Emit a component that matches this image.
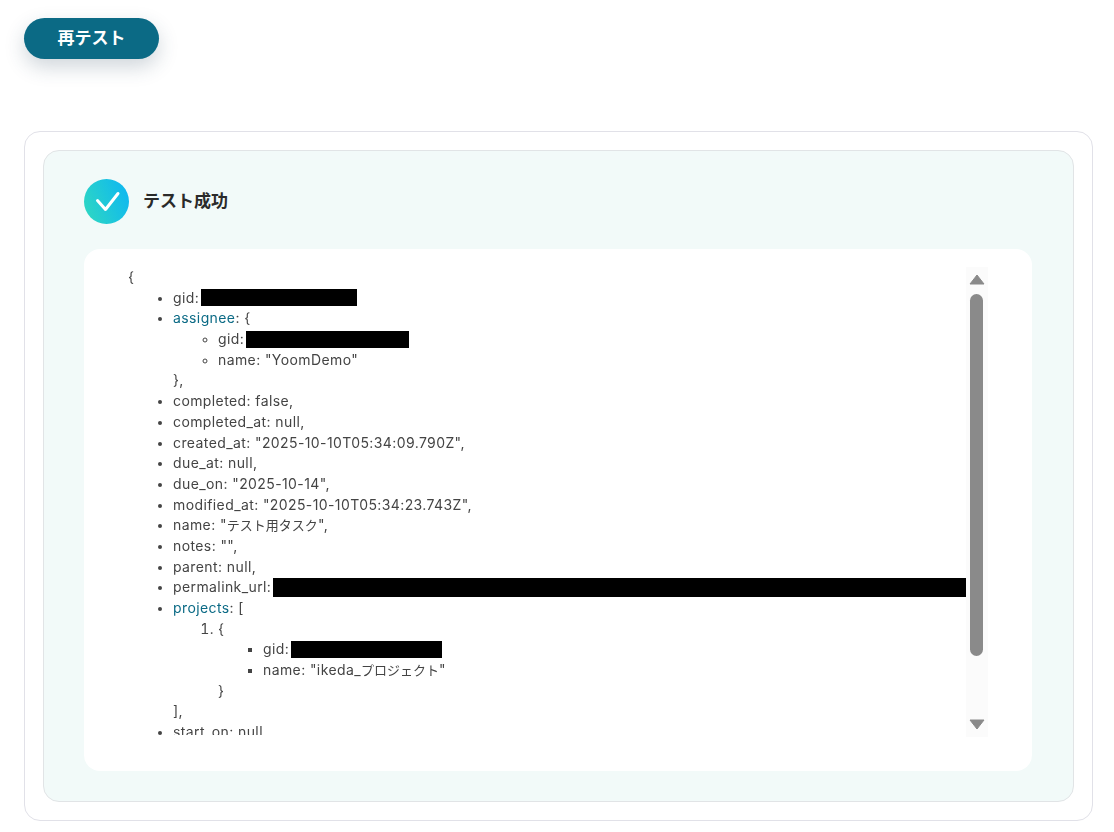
<script>
</script>

<div class="page">
  <button class="retest">再テスト</button>
  <section class="outer">
    <div class="inner">
      <header class="head">
        <svg class="check" width="45" height="45" viewBox="0 0 45 45">
          <defs>
            <linearGradient id="g" x1="0" y1="0.7" x2="1" y2="0.3">
              <stop offset="0" stop-color="#2dd6c4" />
              <stop offset="1" stop-color="#0fb8f0" />
            </linearGradient>
          </defs>
          <circle cx="22.5" cy="22.5" r="22.5" fill="url(#g)" />
          <path d="M13.5 21.5 L21.5 30.5 L34 14.5" fill="none" stroke="#fff" stroke-width="3" stroke-linecap="round" stroke-linejoin="round" />
        </svg>
        <h2>テスト成功</h2>
      </header>
      <div class="box">
        <div class="scroll">
          <div class="tree">
            <div>&#123;</div>
            <ul class="l1">
              <li>gid:<span class="red r1"></span></li>
              <li>
                <span class="key">assignee</span>: &#123;
                <ul class="l2">
                  <li>gid:<span class="red r2"></span></li>
                  <li>name: "YoomDemo"</li>
                </ul>
                &#125;,
              </li>
              <li>completed: false,</li>
              <li>completed_at: null,</li>
              <li>created_at: "2025-10-10T05:34:09.790Z",</li>
              <li>due_at: null,</li>
              <li>due_on: "2025-10-14",</li>
              <li>modified_at: "2025-10-10T05:34:23.743Z",</li>
              <li>name: "<span class="ja">テスト用タスク</span>",</li>
              <li>notes: "",</li>
              <li>parent: null,</li>
              <li>permalink_url:<span class="red r3"></span></li>
              <li>
                <span class="key">projects</span>: [
                <ol>
                  <li>
                    &#123;
                    <ul class="l3">
                      <li>gid:<span class="red r4"></span></li>
                      <li>name: "ikeda_<span class="ja">プロジェクト</span>"</li>
                    </ul>
                    &#125;
                  </li>
                </ol>
                ],
              </li>
              <li>start_on: null,</li>
              <li>tags: [],</li>
            </ul>
          </div>
        </div>
        <div class="bar" aria-hidden="true">
          <svg class="arrow up" width="16" height="11" viewBox="0 0 16 11"><path d="M8 1 L15 10 H1 Z" fill="#8a8a8a" stroke="#8a8a8a" stroke-linejoin="round" /></svg>
          <div class="thumb"></div>
          <svg class="arrow down" width="16" height="11" viewBox="0 0 16 11"><path d="M1 1 H15 L8 10 Z" fill="#8a8a8a" stroke="#8a8a8a" stroke-linejoin="round" /></svg>
        </div>
      </div>
    </div>
  </section>
</div>

<style>
  :global(body) {
    margin: 0;
    background: #fff;
  }
  .page {
    box-sizing: border-box;
    width: 1114px;
    height: 832px;
    padding: 18px 21px 0 24px;
    font-family: Inter, "Noto Sans CJK JP", sans-serif;
    color: #333;
  }
  .retest {
    display: block;
    width: 135px;
    height: 41px;
    padding: 0 0 4px;
    border: 0;
    border-radius: 21px;
    background: #0b6a85;
    color: #fff;
    font: 700 17px Inter, "Noto Sans CJK JP", sans-serif;
    box-shadow: 0 8px 20px rgba(40, 70, 90, 0.22);
  }
  .outer {
    box-sizing: border-box;
    height: 690px;
    margin-top: 72px;
    padding: 18px;
    border: 1px solid #e1e1e8;
    border-radius: 16px;
    background: #fff;
  }
  .inner {
    box-sizing: border-box;
    height: 652px;
    padding: 28px 41px 30px 40px;
    border: 1px solid #e1e4e6;
    border-radius: 16px;
    background: #f2faf9;
  }
  .head {
    display: flex;
    align-items: center;
    gap: 14px;
    height: 45px;
  }
  .check {
    display: block;
    flex: none;
  }
  h2 {
    margin: -4px 0 0;
    font-size: 17px;
    font-weight: 700;
    color: #2a2a2a;
  }
  .box {
    display: flex;
    box-sizing: border-box;
    height: 522px;
    margin-top: 25px;
    padding: 18px 44px 34px 44px;
    border-radius: 16px;
    background: #fff;
  }
  .scroll {
    flex: 1;
    min-width: 0;
    margin-bottom: 2px;
    overflow: hidden;
  }
  .tree {
    font-size: 14px;
    line-height: 20.68px;
    letter-spacing: 0.4px;
    color: #444;
    will-change: transform;
  }
  .ja {
    font-size: 13px;
    letter-spacing: 0;
  }
  li {
    white-space: nowrap;
  }
  ul,
  ol {
    margin: 0;
    padding-left: 45px;
  }
  .l1 {
    list-style: disc;
  }
  .l2 {
    list-style: circle;
  }
  .l3 {
    list-style: square;
  }
  ul > li::marker {
    font-size: 12.5px;
  }
  .key {
    color: #0b6a85;
  }
  .red {
    display: inline-block;
    vertical-align: middle;
    margin: -1px 0 1px 2px;
    background: #000;
  }
  .r1 {
    width: 156px;
    height: 17px;
  }
  .r2 {
    width: 163px;
    height: 17px;
  }
  .r3 {
    width: 693px;
    height: 19px;
  }
  .r4 {
    width: 151px;
    height: 17px;
  }
  .bar {
    position: relative;
    flex: none;
    width: 22px;
    background: #fbfbfb;
  }
  .thumb {
    position: absolute;
    top: 27px;
    left: 4px;
    width: 13px;
    height: 362px;
    border-radius: 7px;
    background: #8a8a8a;
  }
  .arrow {
    position: absolute;
    left: 3px;
  }
  .up {
    top: 7px;
  }
  .down {
    bottom: 7px;
  }
</style>
